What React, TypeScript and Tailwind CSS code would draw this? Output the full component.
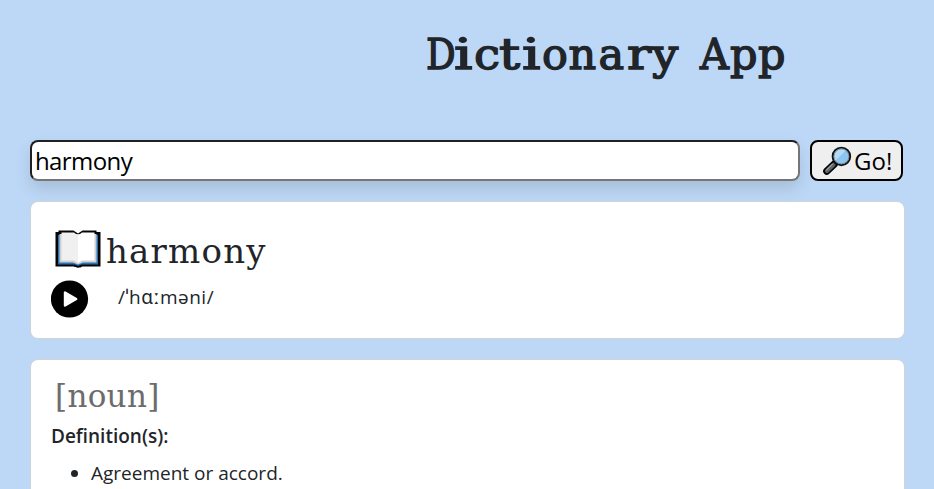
function Magnifier() {
  return (
    <svg className="h-[30px] w-[30px] shrink-0" viewBox="0 0 30 30" fill="none">
      <path d="M4.8 25.2 12.5 17.8" stroke="#000" strokeWidth="7.2" strokeLinecap="round" />
      <path d="M5 25 11.5 18.8" stroke="#5c6267" strokeWidth="4.2" strokeLinecap="round" />
      <path d="M4.6 24 10.3 18.4" stroke="#9aa0a3" strokeWidth="1.2" strokeLinecap="round" />
      <path d="M12.5 17.5 15 15" stroke="#000" strokeWidth="2.5" />
      <circle cx="19.4" cy="10.4" r="8.8" fill="#8dc5f1" stroke="#111" strokeWidth="1.9" />
      <path d="M13.3 14.8A7.5 7.5 0 0 1 23.8 4.4Z" fill="#b5daf7" />
      <circle cx="19.4" cy="10.4" r="7.5" stroke="#6e7b84" strokeWidth="0.8" />
    </svg>
  );
}

function Book() {
  return (
    <svg className="h-[38px] w-[46px] shrink-0" viewBox="0 0 46 38">
      <path d="M.5 2h3V.4h15l4.5 3 4.5-3h14V2h4v34.5H27c-1 1.6-7 1.6-8 0H.5Z" fill="#050505" />
      <path d="M3 5h40v29.5H26c-1 1.5-5 1.5-6 0H3Z" fill="#2b72b5" />
      <path d="M4.5 4h37v28.5H28l-5 2-5-2H4.5Z" fill="#cfd0d1" />
      <path d="M6.5 2.5h12.5l4 3V33l-4-2.5H6.5Z" fill="#f0f0f0" />
      <path d="M39.5 2.5H27l-4 3V33l4-2.5h12.5Z" fill="#fff" />
    </svg>
  );
}

const typewriter = "font-['DejaVu_Serif',serif]";

export default function App() {
  return (
    <div className="h-[489px] w-[934px] overflow-hidden bg-[#bdd8f7] pl-[30px] pr-[29px] font-['Open_Sans','Noto_Sans',sans-serif] text-[#212529]">
      <h1 className={`${typewriter} h-[140px] pl-[396px] pt-[22px] text-[43px] leading-[64px] whitespace-nowrap [-webkit-text-stroke:1.4px_#212529] [stroke-linejoin:round]`}>
        <span className="inline-block w-[28px] origin-left scale-x-[0.86]">D</span>
        <span className="inline-block w-[20px] origin-left scale-x-[1.35]">i</span>
        <span className="inline-block w-[25px] origin-left scale-x-[1.08]">c</span>
        <span className="inline-block w-[23px] origin-left scale-x-[1.22]">t</span>
        <span className="inline-block w-[20px] origin-left scale-x-[1.35]">i</span>
        <span className="tracking-[0.5px]">on</span>
        <span className="ml-[2px] tracking-[2.8px]">a</span>
        <span className="inline-block w-[25px] origin-left scale-x-[1.18]">r</span>
        <span className="inline-block w-[28px] origin-left scale-x-[1.08]">y</span>
        <span className="ml-[20px] inline-block w-[29px] origin-left scale-x-[0.93]">A</span>
        <span className="ml-[1px] tracking-[0.5px]">pp</span>
      </h1>
      <div className="flex h-[41px] gap-[10px]">
        <input
          defaultValue="harmony"
          className="w-[770px] rounded-[8px] border-2 border-t-[#202020] border-l-[#202020] border-r-[#767676] border-b-[#767676] bg-white px-[3px] text-[24px] tracking-[-0.6px] text-black shadow-[0_8px_16px_rgba(0,0,0,0.12)] outline-none"
        />
        <button className="flex w-[93px] items-center rounded-[8px] border-2 border-black bg-[#efefef] pl-[10px] text-[24px] text-black">
          <Magnifier />
          <span className="ml-[2px]">Go!</span>
        </button>
      </div>
      <section className="relative mt-5 h-[138px] w-[875px] rounded-[8px] border border-[#d0d3d7] bg-white pl-5 pt-7">
        <div className="flex h-[50px] pl-1">
          <Book />
          <h2 className={`${typewriter} ml-[5px] text-[34px] leading-[43px] tracking-[1.2px]`}>harmony</h2>
        </div>
        <div className="flex">
          <svg className="h-[38px] w-[38px]" viewBox="0 0 38 38">
            <circle cx="18.5" cy="19" r="18.6" fill="#000" />
            <path d="M14 12.5v13L25.2 19Z" fill="#fff" stroke="#fff" strokeWidth="2.4" strokeLinejoin="round" />
          </svg>
          <span className="ml-[29px] text-[19px] leading-[34px] tracking-[0.5px]">/ˈhɑːməni/</span>
        </div>
      </section>
      <section className="mt-5 h-[200px] w-[875px] rounded-[8px] border border-[#d0d3d7] bg-white pl-5 pt-4">
        <h3 className={`${typewriter} pl-1 text-[31px] leading-[40px] tracking-[0.3px] text-[#6c6c6c]`}>[noun]</h3>
        <h4 className="mt-[7px] text-[19px] font-semibold leading-[27px]">Definition(s):</h4>
        <ul className="mt-[10px] list-disc pl-10 text-[19px] leading-[27px]">
          <li>Agreement or accord.</li>
        </ul>
      </section>
    </div>
  );
}
